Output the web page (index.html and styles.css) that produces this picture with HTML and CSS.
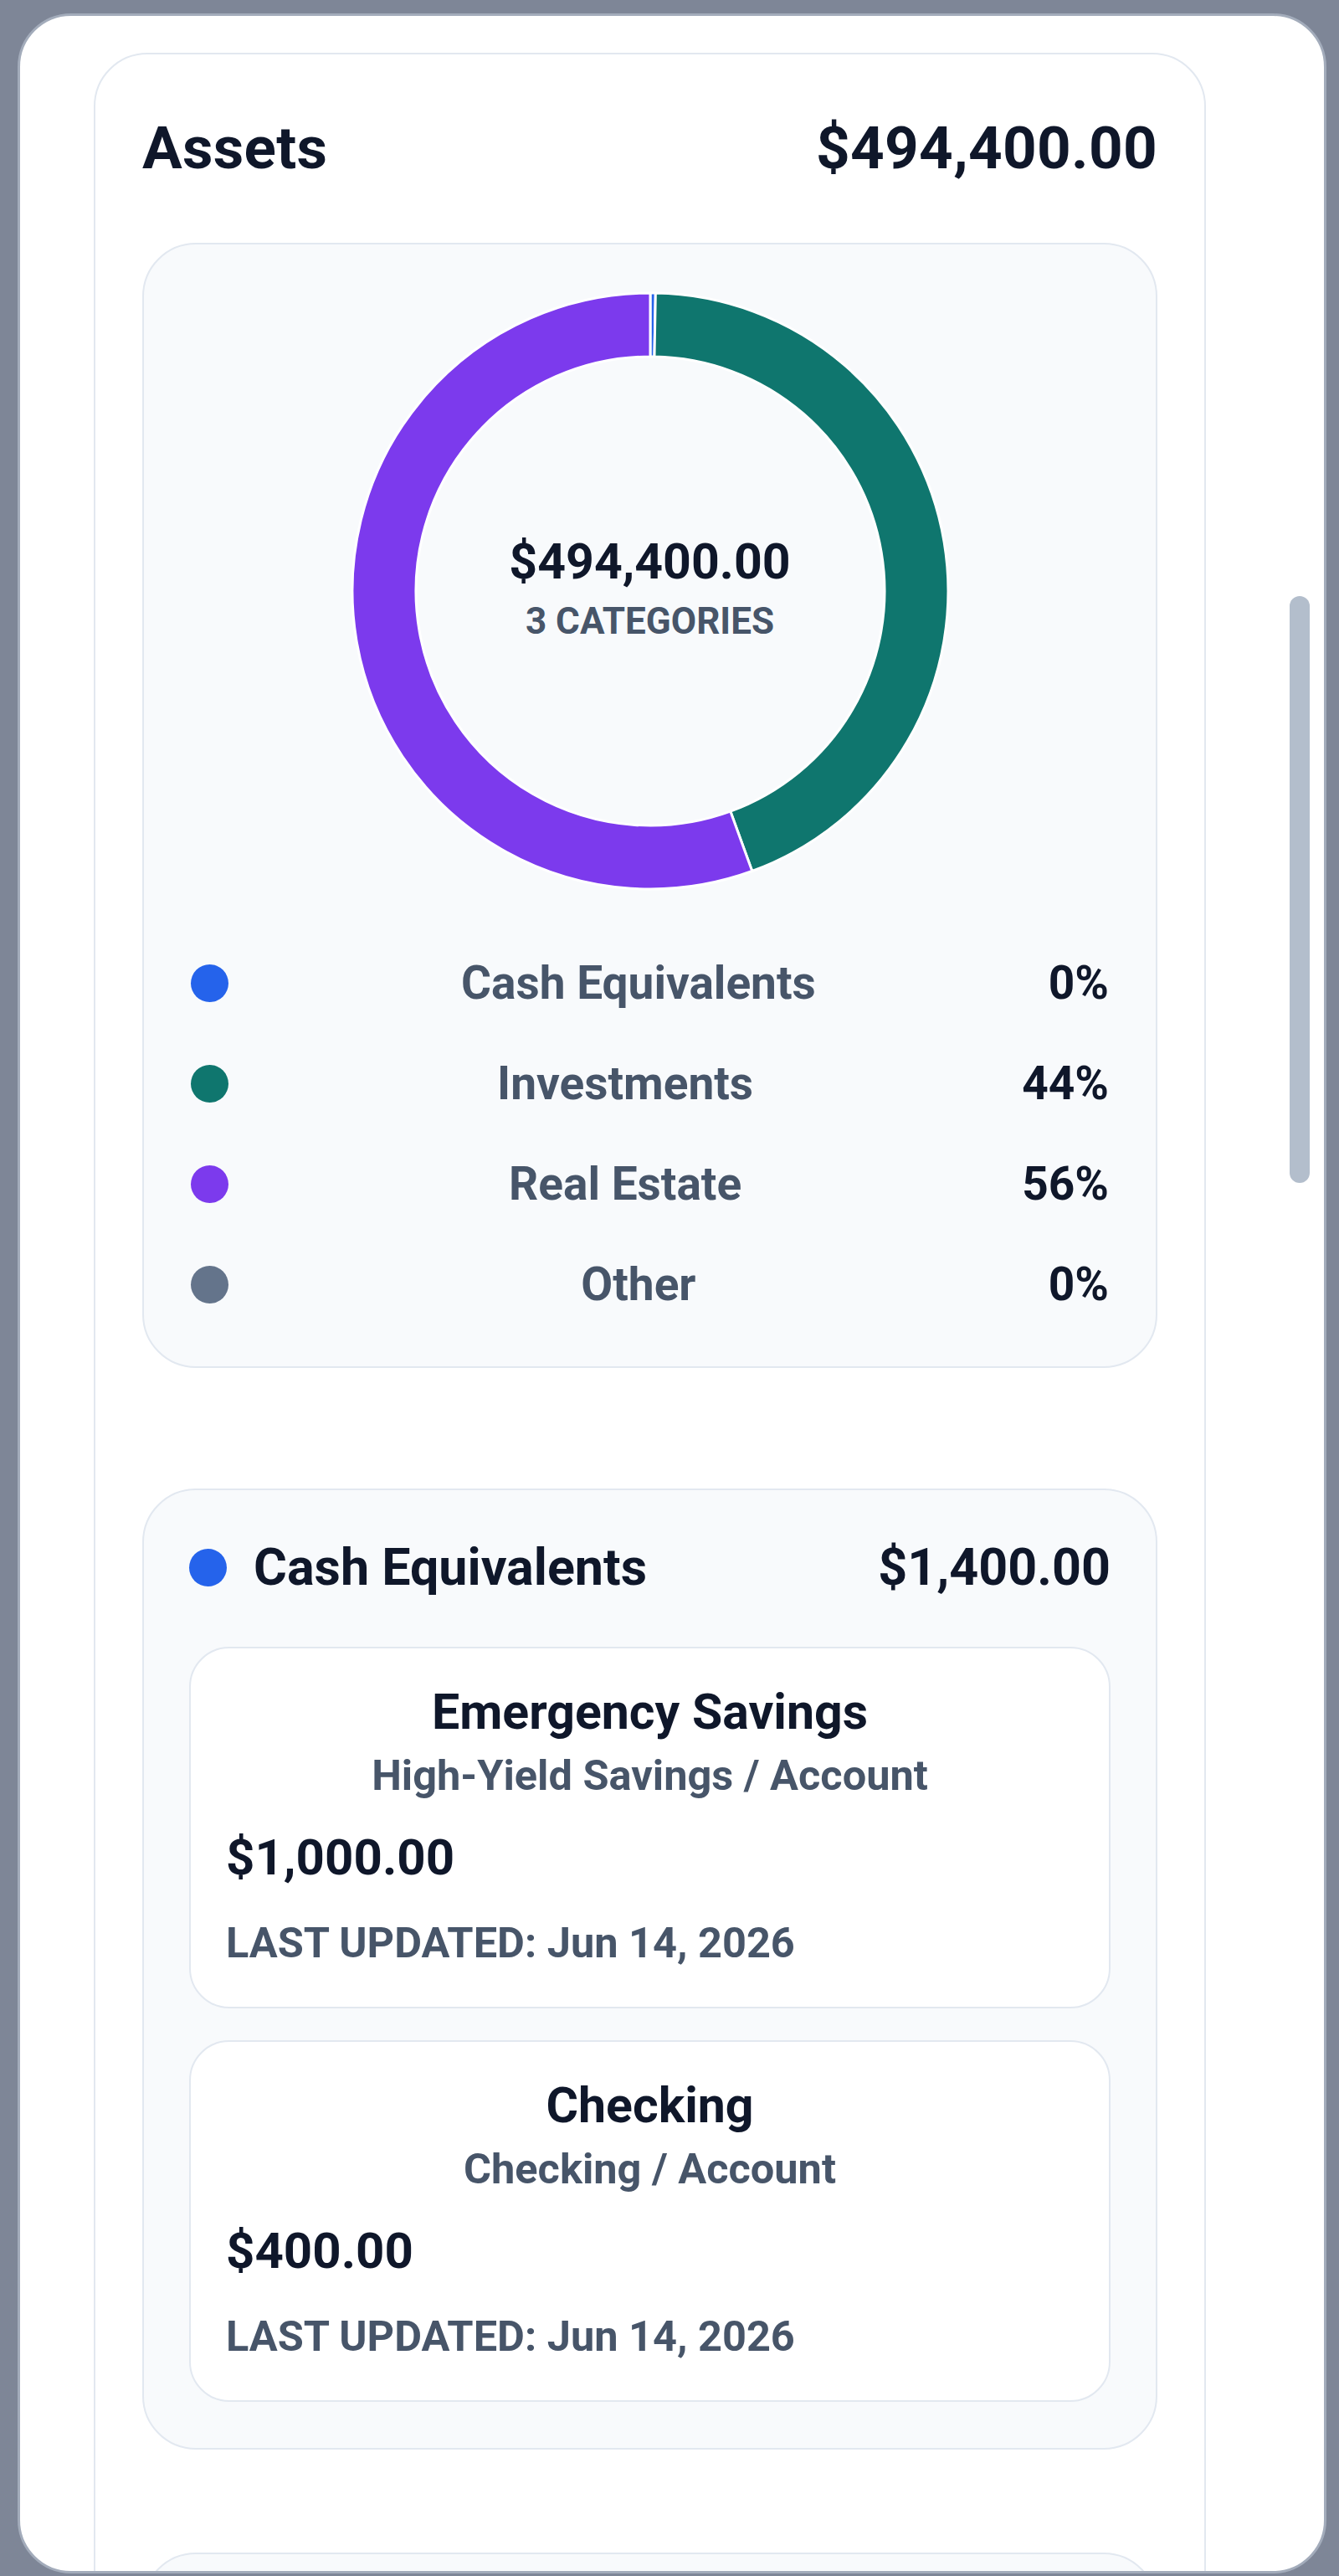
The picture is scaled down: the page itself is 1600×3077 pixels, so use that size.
FILE: index.html
```html
<!DOCTYPE html>
<html lang="en">
<head>
<meta charset="utf-8">
<title>Assets</title>
<link rel="stylesheet" href="styles.css">
</head>
<body>
<div class="modal">
  <div class="modal-scroll">
    <section class="assets">
      <header class="assets-head">
        <h2 class="assets-title">Assets</h2>
        <span class="assets-total">$494,400.00</span>
      </header>

      <div class="chart-panel">
        <div class="donut">
          <svg class="donut-svg" width="716" height="716" viewBox="0 0 716 716">
            <path d="M358 2 A356 356 0 0 1 364.34 2.06 L362.98 78.04 A280 280 0 0 0 358 78 Z" fill="#2563eb" stroke="#ffffff" stroke-width="3" stroke-linejoin="round"/>
            <path d="M364.34 2.06 A356 356 0 0 1 479.76 692.53 L453.77 621.11 A280 280 0 0 0 362.98 78.04 Z" fill="#0f766e" stroke="#ffffff" stroke-width="3" stroke-linejoin="round"/>
            <path d="M479.76 692.53 A356 356 0 1 1 358 2 L358 78 A280 280 0 1 0 453.77 621.11 Z" fill="#7c3aed" stroke="#ffffff" stroke-width="3" stroke-linejoin="round"/>
          </svg>
          <div class="donut-center">
            <div class="donut-total">$494,400.00</div>
            <div class="donut-sub">3 CATEGORIES</div>
          </div>
        </div>

        <ul class="legend">
          <li class="legend-row"><span class="dot dot-blue"></span><span class="legend-label">Cash Equivalents</span><span class="legend-pct">0%</span></li>
          <li class="legend-row"><span class="dot dot-teal"></span><span class="legend-label">Investments</span><span class="legend-pct">44%</span></li>
          <li class="legend-row"><span class="dot dot-purple"></span><span class="legend-label">Real Estate</span><span class="legend-pct">56%</span></li>
          <li class="legend-row"><span class="dot dot-gray"></span><span class="legend-label">Other</span><span class="legend-pct">0%</span></li>
        </ul>
      </div>

      <div class="category">
        <div class="cat-head">
          <span class="dot dot-blue"></span>
          <h3 class="cat-title">Cash Equivalents</h3>
          <span class="cat-total">$1,400.00</span>
        </div>
        <div class="accounts">
          <article class="account">
            <div class="acct-name">Emergency Savings</div>
            <div class="acct-type">High-Yield Savings / Account</div>
            <div class="acct-amount">$1,000.00</div>
            <div class="acct-updated">LAST UPDATED: Jun 14, 2026</div>
          </article>
          <article class="account">
            <div class="acct-name">Checking</div>
            <div class="acct-type">Checking / Account</div>
            <div class="acct-amount">$400.00</div>
            <div class="acct-updated">LAST UPDATED: Jun 14, 2026</div>
          </article>
        </div>
      </div>

      <div class="category category-next"></div>
    </section>
  </div>
  <div class="scroll-gutter"><div class="scroll-thumb"></div></div>
</div>
</body>
</html>
```

FILE: styles.css
```css
* { box-sizing: border-box; }

html, body {
  margin: 0;
  padding: 0;
  height: 3077px;
  overflow: hidden;
}

body {
  background: #7e8697;
  font-family: Roboto, "Liberation Sans", Arial, sans-serif;
  color: #0f172a;
}

.modal {
  margin: 16px 15px 0 21px;
  height: 3058px;
  background: #ffffff;
  border: 3px solid #a3acbb;
  border-radius: 64px;
  overflow: hidden;
  display: flex;
}

.modal-scroll {
  flex: 1;
  padding: 44px 0 0 88px;
}

.scroll-gutter {
  width: 141px;
  flex: none;
  padding: 693px 0 0 100px;
}

.scroll-thumb {
  width: 24px;
  height: 701px;
  border-radius: 12px;
  background: #b3becc;
}

.assets {
  width: 1329px;
  background: #ffffff;
  border: 2px solid #e2e8f0;
  border-radius: 64px;
  padding: 70px 56px 0;
}

.assets-head {
  display: flex;
  justify-content: space-between;
  align-items: center;
  margin-bottom: 71px;
}

.assets-title,
.assets-total {
  margin: 0;
  font-size: 71px;
  line-height: 84px;
  font-weight: 700;
  letter-spacing: 0.3px;
  color: #0f172a;
}

.chart-panel {
  background: #f8fafc;
  border: 2px solid #e2e8f0;
  border-radius: 64px;
  padding: 56px 56px 66px;
}

.donut {
  position: relative;
  width: 716px;
  height: 716px;
  margin: 0 auto;
}

.donut-svg {
  display: block;
}

.donut-center {
  position: absolute;
  inset: 0;
  display: flex;
  flex-direction: column;
  align-items: center;
  justify-content: center;
  padding-bottom: 8px;
}

.donut-total {
  font-size: 59px;
  line-height: 70px;
  font-weight: 700;
  color: #0f172a;
}

.donut-sub {
  margin-top: 10px;
  font-size: 44px;
  line-height: 52px;
  font-weight: 700;
  color: #475569;
}

.legend {
  list-style: none;
  margin: 78px 0 0;
  padding: 0;
  display: flex;
  flex-direction: column;
  gap: 56px;
}

.legend-row {
  display: flex;
  align-items: center;
  gap: 24px;
  height: 64px;
}

.dot {
  width: 45px;
  height: 45px;
  border-radius: 50%;
  flex: none;
}

.dot-blue { background: #2563eb; }
.dot-teal { background: #0f766e; }
.dot-purple { background: #7c3aed; }
.dot-gray { background: #64748b; }

.legend-label {
  flex: 1;
  text-align: center;
  font-size: 55px;
  line-height: 64px;
  font-weight: 700;
  color: #475569;
}

.legend-pct {
  font-size: 55px;
  line-height: 64px;
  font-weight: 700;
  color: #0f172a;
}

.category {
  margin-top: 144px;
  background: #f8fafc;
  border: 2px solid #e2e8f0;
  border-radius: 64px;
  padding: 56px 54px 55px;
}

.category-next {
  margin-top: 123px;
  height: 600px;
}

.cat-head {
  display: flex;
  align-items: center;
  gap: 32px;
}

.cat-title {
  flex: 1;
  margin: 0;
  font-size: 61px;
  line-height: 72px;
  font-weight: 700;
  color: #0f172a;
}

.cat-total {
  font-size: 61px;
  line-height: 72px;
  font-weight: 700;
  color: #0f172a;
}

.accounts {
  margin-top: 59px;
  display: flex;
  flex-direction: column;
  gap: 38px;
}

.account {
  background: #ffffff;
  border: 2px solid #e2e8f0;
  border-radius: 48px;
  padding: 40px 42px 44px;
}

.acct-name {
  text-align: center;
  font-size: 59px;
  line-height: 72px;
  font-weight: 700;
  color: #0f172a;
}

.acct-type {
  margin-top: 8px;
  text-align: center;
  font-size: 50.5px;
  line-height: 64px;
  font-weight: 700;
  color: #475569;
}

.acct-amount {
  margin-top: 30px;
  font-size: 60px;
  line-height: 72px;
  font-weight: 700;
  color: #0f172a;
}

.acct-updated {
  margin-top: 34px;
  font-size: 50.5px;
  line-height: 64px;
  font-weight: 700;
  color: #475569;
}
```
